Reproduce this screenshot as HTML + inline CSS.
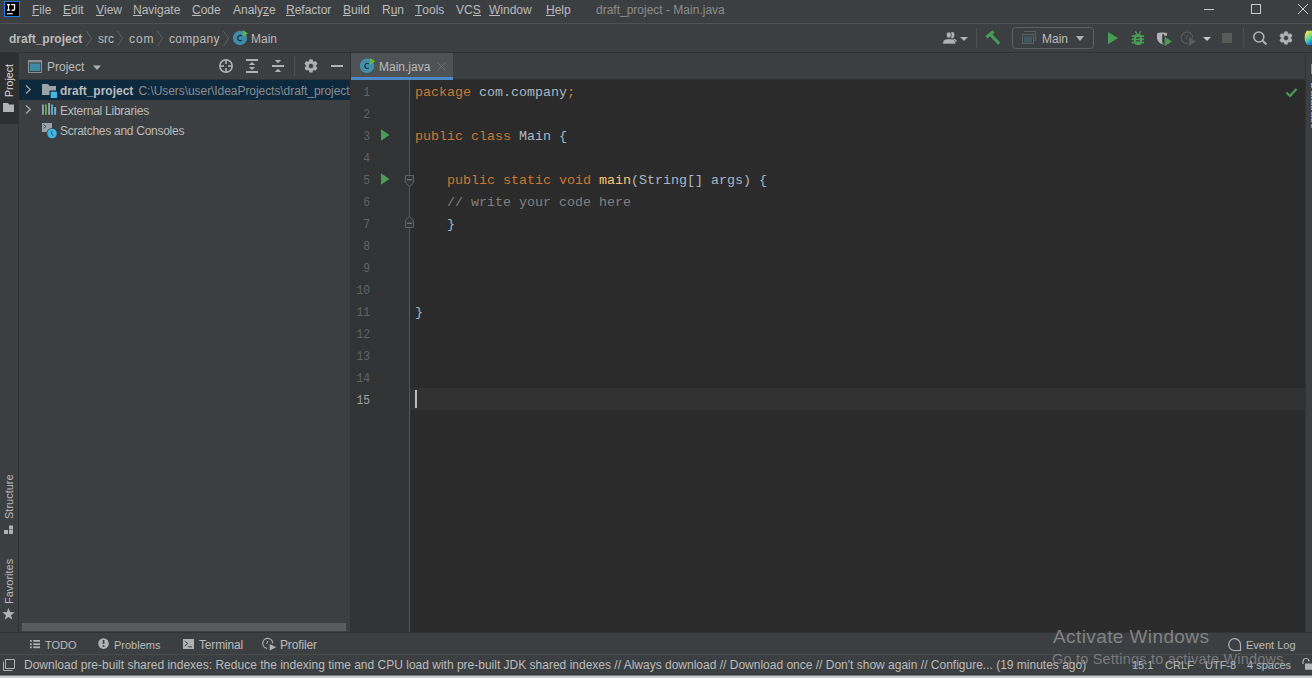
<!DOCTYPE html>
<html><head><meta charset="utf-8">
<style>
*{margin:0;padding:0;box-sizing:border-box}
html,body{width:1312px;height:678px;overflow:hidden;background:#3C3F41}
body{position:relative;font-family:"Liberation Sans",sans-serif;font-size:12px;color:#BBBBBB}
.a{position:absolute}
.t{position:absolute;white-space:pre;line-height:14px}
u{text-decoration:none;border-bottom:1px solid currentColor;display:inline-block;line-height:10px}
.code{position:absolute;font-family:"Liberation Mono",monospace;font-size:13.33px;white-space:pre;line-height:22px;color:#A9B7C6}
.ln{position:absolute;font-family:"Liberation Mono",monospace;font-size:13px;white-space:pre;line-height:22px;color:#606366;text-align:right;width:20px}
.kw{color:#CC7832}
.fn{color:#FFC66D}
.cm{color:#808080}
svg{position:absolute;overflow:visible}
</style></head><body>

<!-- MENU BAR -->
<div class="a" style="left:0;top:0;width:1312px;height:23px;background:#3C3F41"></div>
<div class="a" style="left:0;top:23px;width:1312px;height:1px;background:#515151"></div>
<!-- logo -->
<svg style="left:4px;top:1px" width="16" height="16">
<rect x="0.5" y="0.5" width="15" height="15" fill="#000" stroke="#1E80F0" stroke-width="1"/>
<path d="M2.9 3H6.1V4.2H5.1V8.6H6.1V9.8H2.9V8.6H3.9V4.2H2.9Z" fill="#fff"/>
<path d="M7.2 3H11.2V8.2Q11.2 9.9 9.2 9.9H7.6V8.6H9.2Q9.9 8.6 9.9 7.9V4.2H7.2Z" fill="#fff"/>
<rect x="2.9" y="12.2" width="5.9" height="1.1" fill="#fff"/>
</svg>
<div class="t" style="left:32px;top:3px"><u>F</u>ile</div>
<div class="t" style="left:63px;top:3px"><u>E</u>dit</div>
<div class="t" style="left:96px;top:3px"><u>V</u>iew</div>
<div class="t" style="left:133px;top:3px"><u>N</u>avigate</div>
<div class="t" style="left:192px;top:3px"><u>C</u>ode</div>
<div class="t" style="left:233px;top:3px">Analy<u>z</u>e</div>
<div class="t" style="left:286px;top:3px"><u>R</u>efactor</div>
<div class="t" style="left:343px;top:3px"><u>B</u>uild</div>
<div class="t" style="left:382px;top:3px">R<u>u</u>n</div>
<div class="t" style="left:415px;top:3px"><u>T</u>ools</div>
<div class="t" style="left:456px;top:3px">VC<u>S</u></div>
<div class="t" style="left:489px;top:3px"><u>W</u>indow</div>
<div class="t" style="left:546px;top:3px"><u>H</u>elp</div>
<div class="t" style="left:596px;top:3px;color:#8C8C8C">draft_project - Main.java</div>

<!-- window controls -->
<div class="a" style="left:1204px;top:9px;width:10px;height:1px;background:#C8C8C8"></div>
<div class="a" style="left:1251px;top:4px;width:10px;height:10px;border:1px solid #C8C8C8"></div>
<svg style="left:1298px;top:4px" width="10" height="10"><path d="M0 0L10 10M10 0L0 10" stroke="#C8C8C8" stroke-width="1"/></svg>

<!-- NAV BAR -->
<div class="a" style="left:0;top:52px;width:1312px;height:1px;background:#323232"></div>
<div class="t" style="left:9px;top:32px;font-weight:bold">draft_project</div>
<div class="t" style="left:98px;top:32px">src</div>
<div class="t" style="left:129px;top:32px;letter-spacing:0.9px">com</div>
<div class="t" style="left:169px;top:32px;letter-spacing:0.3px">company</div>
<div class="t" style="left:251px;top:32px">Main</div>
<div class="t" style="left:1042px;top:32px">Main</div>


<!-- NAV ICONS -->
<svg style="left:86px;top:31px" width="6" height="15"><path d="M0.5 0L5.5 7.5L0.5 15" fill="none" stroke="#5E6162" stroke-width="1"/></svg>
<svg style="left:117px;top:31px" width="6" height="15"><path d="M0.5 0L5.5 7.5L0.5 15" fill="none" stroke="#5E6162" stroke-width="1"/></svg>
<svg style="left:157px;top:31px" width="6" height="15"><path d="M0.5 0L5.5 7.5L0.5 15" fill="none" stroke="#5E6162" stroke-width="1"/></svg>
<svg style="left:223px;top:31px" width="6" height="15"><path d="M0.5 0L5.5 7.5L0.5 15" fill="none" stroke="#5E6162" stroke-width="1"/></svg>
<svg style="left:225px;top:22px" width="30" height="30"><circle cx="15" cy="16" r="7.2" fill="#3F8CA8"/><path d="M16.9 14A2.6 2.6 0 1 0 16.9 18.2" fill="none" stroke="#1F2A2E" stroke-width="1.1"/><path d="M17.8 8L23 11.5L17.8 15Z" fill="#62B543"/></svg>


<!-- TOOLBAR RIGHT -->
<svg style="left:0;top:0" width="1312" height="60">
  <!-- users -->
  <ellipse cx="952.4" cy="35" rx="2" ry="3" fill="#AFB1B3"/>
  <path d="M951 38.6Q956.6 38.8 957 41.6L954 41.6Z" fill="#AFB1B3"/>
  <ellipse cx="948.8" cy="35" rx="2.6" ry="3.1" fill="#AFB1B3" stroke="#3C3F41" stroke-width="0.8"/>
  <path d="M942.8 44V42.2Q943.2 39 949 38.8Q954.8 39 955.4 42.2V44Z" fill="#AFB1B3" stroke="#3C3F41" stroke-width="0.6"/>
  <path d="M960 37L968 37L964 41Z" fill="#AFB1B3"/>
  <rect x="976" y="28" width="1" height="20" fill="#515151"/>
  <!-- hammer -->
  <path d="M986.3 37.2L993.6 31.6" stroke="#499C54" stroke-width="3.2"/>
  <path d="M990.2 34.2L999.2 43.8" stroke="#499C54" stroke-width="3"/>
  <!-- combo -->
  <rect x="1012.5" y="27.5" width="81" height="21" rx="3" fill="none" stroke="#5E6060"/>
  <path d="M1024 31.5H1035.5V41" fill="none" stroke="#5E6060" stroke-width="1.2"/>
  <rect x="1022.5" y="34.5" width="11" height="9" fill="none" stroke="#5E6060"/>
  <rect x="1024" y="36.5" width="8" height="6" fill="#3D5A66"/>
  <path d="M1076 36L1084 36L1080 41Z" fill="#AFB1B3"/>
  <!-- run -->
  <path d="M1108 32L1118 38L1108 44.2Z" fill="#499C54"/>
  <!-- bug -->
  <rect x="1134" y="34" width="8" height="11" rx="3.5" fill="#499C54"/>
  <rect x="1131.7" y="35.3" width="12.4" height="1.6" fill="#499C54"/>
  <rect x="1131.7" y="38.5" width="12.4" height="1.6" fill="#499C54"/>
  <rect x="1131.7" y="41.7" width="12.4" height="1.6" fill="#499C54"/>
  <rect x="1136" y="37.2" width="4" height="1.3" fill="#3C3F41"/>
  <rect x="1136" y="40.2" width="4" height="1.3" fill="#3C3F41"/>
  <path d="M1135.3 31.3L1137 33.8M1140.7 31.3L1139 33.8" stroke="#499C54" stroke-width="1.4"/>
  <!-- coverage -->
  <path d="M1157 33.2Q1160 32.4 1162.2 32.6V44.2Q1157.8 42.5 1157 38.5Z" fill="#AFB1B3"/>
  <path d="M1162.2 32.6Q1165 32.5 1167 33.1V35.8H1164.2V44.4L1162.2 44.2Z" fill="#AFB1B3"/>
  <rect x="1162.4" y="34.4" width="1.8" height="9.2" fill="#2F3133"/>
  <path d="M1164.8 37L1172 41.5L1164.8 46Z" fill="#499C54"/>
  <!-- profiler dim -->
  <path d="M1188 43.5A5.8 5.8 0 1 1 1192.8 38" fill="none" stroke="#5B5C5C" stroke-width="1.1"/>
  <path d="M1187.4 35L1186 39.5" stroke="#5B5C5C" stroke-width="1"/>
  <path d="M1189 37L1196 41.5L1189 46Z" fill="#5B5C5C"/>
  <path d="M1203 37L1211 37L1207 41Z" fill="#C8C8C8"/>
  <rect x="1222" y="33" width="10" height="10" fill="#5A5A58"/>
  <rect x="1243" y="28" width="1" height="20" fill="#515151"/>
  <!-- search -->
  <circle cx="1258.8" cy="37" r="5" fill="none" stroke="#AFB1B3" stroke-width="1.6"/>
  <path d="M1262.6 40.8L1266.5 44.5" stroke="#AFB1B3" stroke-width="2"/>
  <path d="M1283.70 34.25 L1284.71 31.63 L1287.29 31.63 L1288.30 34.25 L1288.10 34.13 L1290.87 33.70 L1292.16 35.93 L1290.40 38.12 L1290.40 37.88 L1292.16 40.07 L1290.87 42.30 L1288.10 41.87 L1288.30 41.75 L1287.29 44.37 L1284.71 44.37 L1283.70 41.75 L1283.90 41.87 L1281.13 42.30 L1279.84 40.07 L1281.60 37.88 L1281.60 38.12 L1279.84 35.93 L1281.13 33.70 L1283.90 34.13Z M1283.50 38.00 a2.50 2.50 0 1 0 5.00 0 a2.50 2.50 0 1 0 -5.00 0Z" fill="#AFB1B3" fill-rule="evenodd" stroke="#AFB1B3" stroke-width="0.5" stroke-linejoin="round"/>
  <!-- toolbox -->
  <defs><linearGradient id="tb" x1="0.1" y1="0.1" x2="0.5" y2="1"><stop offset="0" stop-color="#F2E94E"/><stop offset="0.45" stop-color="#8CD97A"/><stop offset="0.75" stop-color="#2EC4B6"/><stop offset="1" stop-color="#1E7BE0"/></linearGradient></defs>
  <path d="M1306.8 30.8L1312 30.8L1312 45L1307.5 45Q1304.6 42 1304.7 37.5Q1304.8 33 1306.8 30.8Z" fill="url(#tb)"/>
  <!-- window controls done elsewhere -->
</svg>

<!-- PROJECT HEADER ICONS -->
<svg style="left:0;top:0" width="360" height="80">
  <rect x="28.5" y="60.5" width="13" height="12" fill="none" stroke="#8C9397" stroke-width="1"/>
  <rect x="28" y="60" width="14" height="2.4" fill="#8C9397"/>
  <rect x="29.8" y="63.4" width="10.4" height="7.6" fill="#3E8BA6"/>
  <path d="M93 65.5L101 65.5L97 70Z" fill="#AFB1B3"/>
  <!-- locate -->
  <circle cx="226" cy="66" r="6.2" fill="none" stroke="#AFB1B3" stroke-width="1.5"/>
  <rect x="225.2" y="59.5" width="1.6" height="4.5" fill="#AFB1B3"/>
  <rect x="225.2" y="68" width="1.6" height="4.5" fill="#AFB1B3"/>
  <rect x="219.5" y="65.2" width="4.5" height="1.6" fill="#AFB1B3"/>
  <rect x="228" y="65.2" width="4.5" height="1.6" fill="#AFB1B3"/>
  <!-- expand -->
  <rect x="246" y="59" width="12" height="2" fill="#AFB1B3"/>
  <rect x="246" y="71" width="12" height="2" fill="#AFB1B3"/>
  <path d="M248.8 65L252 62L255.2 65Z" fill="#AFB1B3"/>
  <path d="M248.8 67L252 70L255.2 67Z" fill="#AFB1B3"/>
  <!-- collapse -->
  <rect x="272" y="65" width="12" height="2" fill="#AFB1B3"/>
  <path d="M274.8 60L281.2 60L278 63.3Z" fill="#AFB1B3"/>
  <path d="M274.8 72L281.2 72L278 68.7Z" fill="#AFB1B3"/>
  <rect x="294" y="56" width="1" height="20" fill="#515151"/>
  <path d="M308.70 62.15 L309.71 59.53 L312.29 59.53 L313.30 62.15 L313.10 62.03 L315.87 61.60 L317.16 63.83 L315.40 66.02 L315.40 65.78 L317.16 67.97 L315.87 70.20 L313.10 69.77 L313.30 69.65 L312.29 72.27 L309.71 72.27 L308.70 69.65 L308.90 69.77 L306.13 70.20 L304.84 67.97 L306.60 65.78 L306.60 66.02 L304.84 63.83 L306.13 61.60 L308.90 62.03Z M308.50 65.90 a2.50 2.50 0 1 0 5.00 0 a2.50 2.50 0 1 0 -5.00 0Z" fill="#AFB1B3" fill-rule="evenodd" stroke="#AFB1B3" stroke-width="0.5" stroke-linejoin="round"/>
  <rect x="331" y="65" width="12" height="2" fill="#AFB1B3"/>
</svg>

<!-- LEFT STRIP -->
<div class="a" style="left:0;top:53px;width:18px;height:579px;background:#3C3F41"></div>
<div class="a" style="left:0;top:53px;width:18px;height:71px;background:#2D2F30"></div>
<div class="a" style="left:18px;top:53px;width:1px;height:579px;background:#323232"></div>

<!-- PROJECT PANEL -->
<div class="a" style="left:19px;top:79px;width:331px;height:1px;background:#323232"></div>
<div class="a" style="left:19px;top:80px;width:331px;height:20px;background:#0D293E"></div>
<div class="t" style="left:47px;top:60px">Project</div>
<div class="t" style="left:60px;top:84px;font-weight:bold">draft_project</div>
<div class="t" style="left:138.5px;top:84px;color:#8C8C8C;letter-spacing:-0.06px">C:\Users\user\IdeaProjects\draft_project</div>
<div class="t" style="left:60px;top:104px;letter-spacing:-0.25px">External Libraries</div>
<div class="t" style="left:60px;top:124px;letter-spacing:-0.27px">Scratches and Consoles</div>
<div class="a" style="left:350px;top:53px;width:1px;height:579px;background:#323232"></div>

<!-- EDITOR -->
<div class="a" style="left:351px;top:53px;width:954px;height:27px;background:#3C3F41"></div>
<div class="a" style="left:351px;top:53px;width:102px;height:24px;background:#4E5254"></div>
<div class="a" style="left:351px;top:77px;width:102px;height:3px;background:#4A88C7"></div>
<div class="a" style="left:453px;top:79px;width:852px;height:1px;background:#303132"></div>
<div class="t" style="left:379px;top:60px">Main.java</div>
<div class="a" style="left:351px;top:80px;width:58px;height:552px;background:#313335"></div>
<div class="a" style="left:409px;top:80px;width:1px;height:552px;background:#555555"></div>
<div class="a" style="left:410px;top:80px;width:895px;height:552px;background:#2B2B2B"></div>
<div class="a" style="left:351px;top:388px;width:58px;height:22px;background:#313335"></div>
<div class="a" style="left:410px;top:388px;width:895px;height:22px;background:#323232"></div>
<div class="a" style="left:1305px;top:53px;width:1px;height:579px;background:#323232"></div>

<div class="ln" style="left:350px;top:82px;transform:scaleX(0.87);transform-origin:20px 0">1
2
3
4
5
6
7
8
9
10
11
12
13
14
<span style="color:#A4A3A3">15</span></div>

<div class="code" style="left:415px;top:82px"><span class="kw">package</span> com.company<span class="kw">;</span>

<span class="kw">public class</span> Main {

    <span class="kw">public static void</span> <span class="fn">main</span>(String[] args) {
    <span class="cm">// write your code here</span>
    }



}



</div>
<div class="a" style="left:415px;top:390px;width:2px;height:18px;background:#BBBBBB"></div>

<!-- BOTTOM -->
<div class="a" style="left:0;top:632px;width:1312px;height:1px;background:#323232"></div>
<div class="t" style="left:45px;top:638px;font-size:11px">TODO</div>
<div class="t" style="left:114px;top:638px;font-size:11px">Problems</div>
<div class="t" style="left:199px;top:638px;letter-spacing:-0.17px">Terminal</div>
<div class="t" style="left:280px;top:638px;letter-spacing:-0.15px">Profiler</div>
<div class="t" style="left:1246px;top:638px;font-size:11px">Event Log</div>
<div class="a" style="left:0;top:654px;width:1312px;height:1px;background:#4A4A48"></div>
<div class="t" style="left:24px;top:658px">Download pre-built shared indexes: Reduce the indexing time and CPU load with pre-built JDK shared indexes // Always download // Download once // Don't show again // Configure... (19 minutes ago)</div>
<div class="t" style="left:1132px;top:658px;font-size:11px">15:1</div>
<div class="t" style="left:1165px;top:658px;font-size:11px">CRLF</div>
<div class="t" style="left:1205px;top:658px;font-size:11px">UTF-8</div>
<div class="t" style="left:1247px;top:658px;font-size:11px">4 spaces</div>
<div class="a" style="left:0;top:674px;width:1312px;height:1px;background:#37393B"></div>
<div class="a" style="left:0;top:675px;width:1312px;height:1px;background:#7C7D7E"></div>
<div class="a" style="left:0;top:676px;width:1312px;height:2px;background:#CDCDCD"></div>

<!-- LEFT STRIP ICONS -->
<div class="t" style="left:4px;top:97px;transform-origin:0 0;transform:rotate(-90deg);font-size:10.6px;line-height:11px;color:#DADADA">Project</div>
<svg style="left:0;top:0" width="20" height="640">
  <path d="M3 103H8L9 104.5H14V112H3Z" fill="#AFB1B3"/>
  <rect x="4" y="530" width="4" height="4" fill="#AFB1B3"/>
  <rect x="9" y="530" width="4" height="4" fill="#AFB1B3"/>
  <rect x="9" y="525.5" width="4" height="4" fill="#AFB1B3"/>
  <path d="M8.50 607.70 L10.09 612.12 L14.78 612.26 L11.07 615.13 L12.38 619.64 L8.50 617.00 L4.62 619.64 L5.93 615.13 L2.22 612.26 L6.91 612.12Z" fill="#AFB1B3"/>
</svg>
<div class="t" style="left:4px;top:519px;transform-origin:0 0;transform:rotate(-90deg);font-size:11px;line-height:11px">Structure</div>
<div class="t" style="left:4px;top:604px;transform-origin:0 0;transform:rotate(-90deg);font-size:11px;line-height:11px">Favorites</div>

<!-- TREE ICONS -->
<svg style="left:0;top:0" width="360" height="640">
  <path d="M26 85.5L30.3 89.5L26 93.5" fill="none" stroke="#A8AAAC" stroke-width="1.2"/>
  <path d="M26 105.5L30.3 109.5L26 113.5" fill="none" stroke="#A8AAAC" stroke-width="1.2"/>
  <path d="M42 84H48L49.5 86H56V95H42Z" fill="#9AA3A9"/>
  <rect x="49.5" y="90.5" width="8.5" height="8.5" fill="#0D293E"/><rect x="50.7" y="91.7" width="6.3" height="6.3" fill="#40B6E0"/>
  <rect x="42" y="104.5" width="1.8" height="10.3" fill="#9AA3A9"/>
  <rect x="45" y="104.5" width="1.8" height="10.3" fill="#62B543"/>
  <rect x="48.1" y="103" width="1.9" height="11.8" fill="#9AA3A9"/>
  <rect x="51.1" y="104.5" width="1.9" height="10.3" fill="#40B6E0"/>
  <rect x="54.2" y="107" width="1.9" height="7.8" fill="#9AA3A9"/>
  <rect x="42" y="123" width="10" height="9" fill="#9AA3A9"/>
  <path d="M43.5 124.5L46 126.5L43.5 128.5" fill="none" stroke="#3C3F41" stroke-width="0.9"/>
  <circle cx="52" cy="133.5" r="5.6" fill="#3C3F41"/>
  <circle cx="52" cy="133.5" r="4.8" fill="#40B6E0"/>
  <path d="M51.6 131V134L53.4 135.8" fill="none" stroke="#2B4A57" stroke-width="0.9"/>
  <!-- horizontal scrollbar -->
  <rect x="22" y="623" width="324" height="8" fill="#595B5D"/>
</svg>

<!-- TAB ICONS -->
<svg style="left:352px;top:50px" width="30" height="30"><circle cx="15" cy="15.8" r="7.2" fill="#4190AC"/><path d="M16.8 13.9A2.5 2.5 0 1 0 16.8 17.9" fill="none" stroke="#1F2A2E" stroke-width="1.1"/><path d="M18 7.9L23.2 11.3L18 14.6Z" fill="#62B543"/></svg>
<svg style="left:437px;top:62px" width="9" height="9"><path d="M0.5 0.5L8.5 8.5M8.5 0.5L0.5 8.5" stroke="#6E7173" stroke-width="1"/></svg>

<!-- GUTTER ICONS -->
<svg style="left:0;top:0" width="1312" height="640">
  <path d="M381 129.2L389.5 135L381 140.8Z" fill="#499C54"/>
  <path d="M381 173.2L389.5 179L381 184.8Z" fill="#499C54"/>
  <path d="M405.5 175.5H413.5V183L409.5 186.5L405.5 183Z" fill="#313335" stroke="#606366" stroke-width="1"/>
  <rect x="407" y="179" width="5" height="1.4" fill="#6E7174"/>
  <path d="M405.5 227.5H413.5V220L409.5 216.5L405.5 220Z" fill="#313335" stroke="#606366" stroke-width="1"/>
  <rect x="407" y="222.6" width="5" height="1.4" fill="#6E7174"/>
  <path d="M1286.5 92.5L1290 96L1296.5 89" fill="none" stroke="#499C54" stroke-width="2.2"/>
</svg>

<!-- BOTTOM ICONS -->
<svg style="left:0;top:0" width="1312" height="678">
  <rect x="30" y="640" width="1.8" height="1.8" fill="#AFB1B3"/><rect x="33.2" y="640" width="6.8" height="1.8" fill="#AFB1B3"/>
  <rect x="30" y="643.3" width="1.8" height="1.8" fill="#AFB1B3"/><rect x="33.2" y="643.3" width="6.8" height="1.8" fill="#AFB1B3"/>
  <rect x="30" y="646.4" width="1.8" height="1.8" fill="#AFB1B3"/><rect x="33.2" y="646.4" width="6.8" height="1.8" fill="#AFB1B3"/>
  <circle cx="103.5" cy="643.6" r="5.3" fill="#AFB1B3"/>
  <rect x="102.7" y="640" width="1.7" height="3.8" fill="#3C3F41"/>
  <rect x="102.7" y="645.2" width="1.7" height="1.6" fill="#3C3F41"/>
  <rect x="183" y="639" width="11" height="10" fill="#AFB1B3"/>
  <path d="M184.8 641.2L187.8 643.6L184.8 646" fill="none" stroke="#3C3F41" stroke-width="1"/>
  <rect x="188.3" y="646.3" width="3.6" height="1" fill="#3C3F41"/>
  <path d="M267 648.3A5 5 0 1 1 272.7 643.3" fill="none" stroke="#AFB1B3" stroke-width="1.2"/>
  <path d="M267.8 640.8L266.8 644" stroke="#AFB1B3" stroke-width="1"/>
  <path d="M269.7 644L276.2 647.3L269.7 650.6Z" fill="#AFB1B3"/>
  <path d="M1240.5 650.5H1234.4A5.9 5.9 0 1 1 1240.5 644.6Z" fill="none" stroke="#AFB1B3" stroke-width="1.2"/>
  <path d="M5.5 659.5H14.5V668.5H5.5Z" fill="none" stroke="#AFB1B3" stroke-width="1"/>
  <path d="M3.5 661.5V670.5H12.5" fill="none" stroke="#AFB1B3" stroke-width="1"/>
  <path d="M1303 664V661.5A3 3 0 0 1 1309 661.5" fill="none" stroke="#AFB1B3" stroke-width="1.2"/>
  <rect x="1305" y="663.5" width="7" height="6.3" fill="#AFB1B3"/>
</svg>
<div class="t" style="left:1053px;top:626px;font-size:19px;letter-spacing:0.4px;line-height:22px;color:rgba(150,150,150,0.8)">Activate Windows</div>
<div class="t" style="left:1052px;top:651px;font-size:14.5px;letter-spacing:0.2px;line-height:17px;color:rgba(150,150,150,0.7)">Go to Settings to activate Windows</div>

<!-- RIGHT STRIP -->
<div class="a" style="left:1311px;top:64px;width:1px;height:10px;background:#8A8C8E"></div>
<div class="t" style="left:1320px;top:82px;transform-origin:0 0;transform:rotate(90deg);font-size:11px;line-height:11px;color:#BBBBBB">Database</div>

</body></html>
